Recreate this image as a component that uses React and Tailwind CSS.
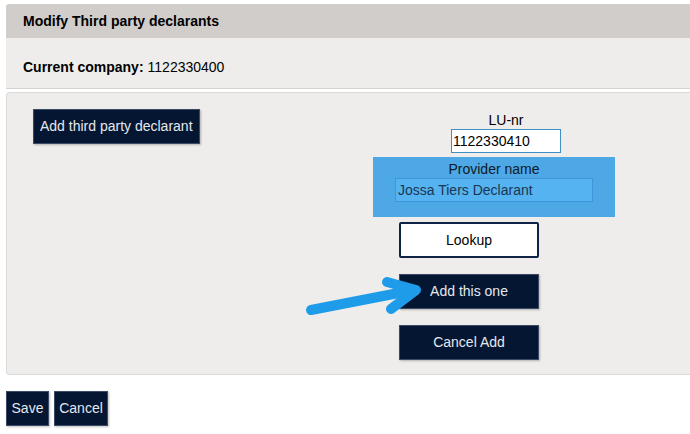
import React from "react";

const navyBtn =
  "bg-[#041632] text-[#e4e8ee] border border-[#3b4b63] shadow-[1px_1px_2px_rgba(0,0,0,0.25)] text-[14px]";

const App = () => {
  return (
    <div className="relative w-[690px] h-[434px] overflow-hidden bg-white font-['Liberation_Sans',Arial,sans-serif] text-[14px] text-black">
      <div className="pt-[4px] pl-[6px]">
        {/* Title */}
        <div className="w-[700px] rounded-tl-[3px] overflow-hidden">
          <div className="h-[34px] bg-[#d0cdcb] flex items-center pl-[17px] pt-[1px] font-bold text-[14px]">
            Modify Third party declarants
          </div>
          <div className="h-[51px] bg-[#eeedeb] border-b border-[#d6d4d2] flex items-center pl-[17px] pt-[9px]">
            <span className="font-bold">Current company:</span>
            <span className="ml-[4px]">1122330400</span>
          </div>
        </div>

        {/* Editor panel */}
        <div className="mt-[3px] w-[700px] h-[283px] bg-[#eeedeb] border border-[#dcdad8] rounded-[3px] flex">
          <div className="w-[366px] pl-[26px] pt-[16px]">
            <button className={`${navyBtn} h-[35px] px-[6px] text-[#d3d9e2]`}>
              Add third party declarant
            </button>
          </div>

          <div className="flex flex-col pt-[19px]">
            <div className="ml-[78px] w-[110px] text-center leading-[16px]">LU-nr</div>
            <input
              readOnly
              value="1122330410"
              className="ml-[78px] mt-[1px] w-[110px] h-[24px] bg-white border border-[#3d8fc4] px-[1px] text-[14px] outline-none"
            />
            <div className="mt-[4px] w-[242px] h-[60px] bg-[#4ea8e6] pt-[4px]">
              <div className="text-center leading-[16px] text-[#0c1a26]">Provider name</div>
              <input
                readOnly
                value="Jossa Tiers Declarant"
                className="ml-[22px] mt-[1px] w-[198px] h-[24px] bg-[#55b3f2] border border-[#3e95dc] px-[2px] text-[14px] text-[#1a3650] outline-none"
              />
            </div>
            <button className="ml-[26px] mt-[5px] w-[140px] h-[36px] bg-white border-2 border-[#0d2446] rounded-[2px] text-[14px] text-black">
              Lookup
            </button>
            <button className={`${navyBtn} ml-[26px] mt-[16px] w-[140px] h-[35px]`}>
              Add this one
            </button>
            <button className={`${navyBtn} ml-[26px] mt-[16px] w-[140px] h-[35px]`}>
              Cancel Add
            </button>
          </div>
        </div>

        {/* Footer buttons */}
        <div className="mt-[16px] flex gap-[5px]">
          <button className={`${navyBtn} h-[35px] w-[43px]`}>Save</button>
          <button className={`${navyBtn} h-[35px] w-[54px]`}>Cancel</button>
        </div>
      </div>

      {/* Annotation arrow */}
      <svg
        className="absolute left-0 top-0 pointer-events-none"
        width="690"
        height="434"
        viewBox="0 0 690 434"
      >
        <g stroke="#1e9be9" strokeWidth="10" strokeLinecap="round" strokeLinejoin="round" fill="none">
          <line x1="311" y1="310" x2="414" y2="290" />
          <polyline points="387,282 416,290 391,309" />
        </g>
      </svg>
    </div>
  );
};

export default App;
